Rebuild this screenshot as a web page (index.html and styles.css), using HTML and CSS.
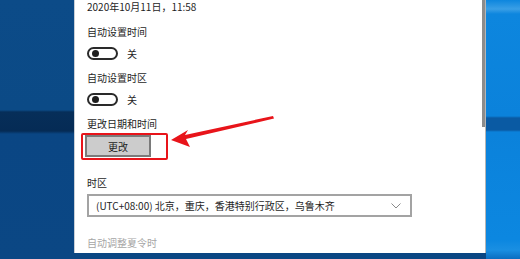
FILE: index.html
```html
<!DOCTYPE html>
<html lang="zh-CN">
<head>
  <meta charset="UTF-8">
  <meta name="viewport" content="width=device-width, initial-scale=1.0">
  <title>日期和时间</title>
  <link rel="stylesheet" href="styles.css">
</head>
<body>
  <!-- Desktop, left side -->
  <div class="desk desk-left"></div>

  <!-- Settings window -->
  <section class="window">
    <div class="scrollbar"></div>
    <div class="content">
      <p class="date">2020年10月11日，11:58</p>

      <p class="label first">自动设置时间</p>
      <div class="toggle-row">
        <span class="toggle"><span class="knob"></span></span>
        <span>关</span>
      </div>

      <p class="label">自动设置时区</p>
      <div class="toggle-row">
        <span class="toggle"><span class="knob"></span></span>
        <span>关</span>
      </div>

      <p class="label">更改日期和时间</p>
      <div class="mark">
        <button class="change-btn">更改</button>
      </div>

      <p class="label zone-label">时区</p>
      <div class="select">
        <span>(UTC+08:00) 北京，重庆，香港特别行政区，乌鲁木齐</span>
        <svg class="chevron" width="10" height="6" viewBox="0 0 10 6">
          <path d="M0.5 0.5 L5 5 L9.5 0.5" fill="none" stroke="#8a8a8a" stroke-width="1"/>
        </svg>
      </div>

      <p class="label disabled">自动调整夏令时</p>
      <div class="toggle-row">
        <span class="toggle off"></span>
      </div>
    </div>
  </section>

  <!-- Desktop, right side -->
  <div class="desk desk-right"></div>

  <!-- Red annotation arrow -->
  <svg class="arrow" width="520" height="259" viewBox="0 0 520 259">
    <polygon points="171,140 188,130 185,135 273,116 274,118.5 186,139 190,147" fill="#e8141a"/>
  </svg>
</body>
</html>
```

FILE: styles.css
```css
body {
  margin: 0;
  width: 520px;
  height: 259px;
  overflow: hidden;
  display: flex;
  font-family: "Noto Sans CJK SC", "Noto Sans", sans-serif;
  font-size: 10px;
  color: #1e1e1e;
  background: #0a4683;
}
.desk {
  height: 259px;
}
.desk-left {
  width: 74px;
  background: linear-gradient(to bottom, #0c4b88 0, #0b4a86 110px, #062e59 112px, #052b55 131px, #0a4684 134px, #0b4784 259px);
}
.desk-right {
  flex: 1;
  background: linear-gradient(to bottom, #0d86de 0, #3a9fe6 9px, #0d86de 14px, #0b82db 116px, #0a5aa3 118px, #0a5aa3 130px, #0b82db 132px, #0c87e0 240px, #1a8fe2 250px, #0a6dc0 259px);
}
.window {
  position: relative;
  width: 412px;
  height: 253px;
  background: #fff;
  border-left: 1px solid #c9cfd6;
  border-right: 1px solid #b5b5b5;
  box-sizing: border-box;
  overflow: hidden;
}
.scrollbar {
  position: absolute;
  right: 0;
  top: 0;
  width: 3px;
  height: 127px;
  background: #8c8c8c;
}
.content {
  padding-left: 12px;
}
p {
  margin: 0;
  line-height: 12px;
}
.date {
  padding-top: 1px;
}
.label {
  margin-top: 12px;
}
.label.first {
  margin-top: 13px;
}
.toggle-row {
  display: flex;
  align-items: center;
  gap: 9px;
  margin-top: 9px;
  height: 13px;
}
.toggle {
  width: 31px;
  height: 13px;
  border: 2px solid #2a2a2a;
  border-radius: 8px;
  box-sizing: border-box;
  display: flex;
  align-items: center;
  padding-left: 3px;
}
.knob {
  width: 7px;
  height: 7px;
  border-radius: 50%;
  background: #1e1e1e;
}
.toggle.off {
  border-color: #c4c4c4;
  background: #c4c4c4;
  margin-top: 2px;
}
.mark {
  display: inline-flex;
  margin-top: 3px;
  margin-left: -6px;
  padding: 0 15px 1px 2px;
  border: 2px solid #e8141a;
  border-radius: 2px;
}
.change-btn {
  width: 66px;
  height: 22px;
  padding: 0;
  background: #cccccc;
  border: 2px solid #7a7a7a;
  font-family: inherit;
  font-size: 10px;
  color: #1e1e1e;
}
.zone-label {
  margin-top: 17px;
}
.select {
  display: flex;
  align-items: center;
  justify-content: space-between;
  width: 325px;
  height: 23px;
  margin-top: 5px;
  padding: 0 9px 0 7px;
  border: 2px solid #a3a3a3;
  box-sizing: border-box;
}
.chevron {
  display: block;
}
.label.disabled {
  margin-top: 20px;
  color: #a6a6a6;
}
.arrow {
  position: absolute;
  top: 0;
  left: 0;
  pointer-events: none;
}
```
